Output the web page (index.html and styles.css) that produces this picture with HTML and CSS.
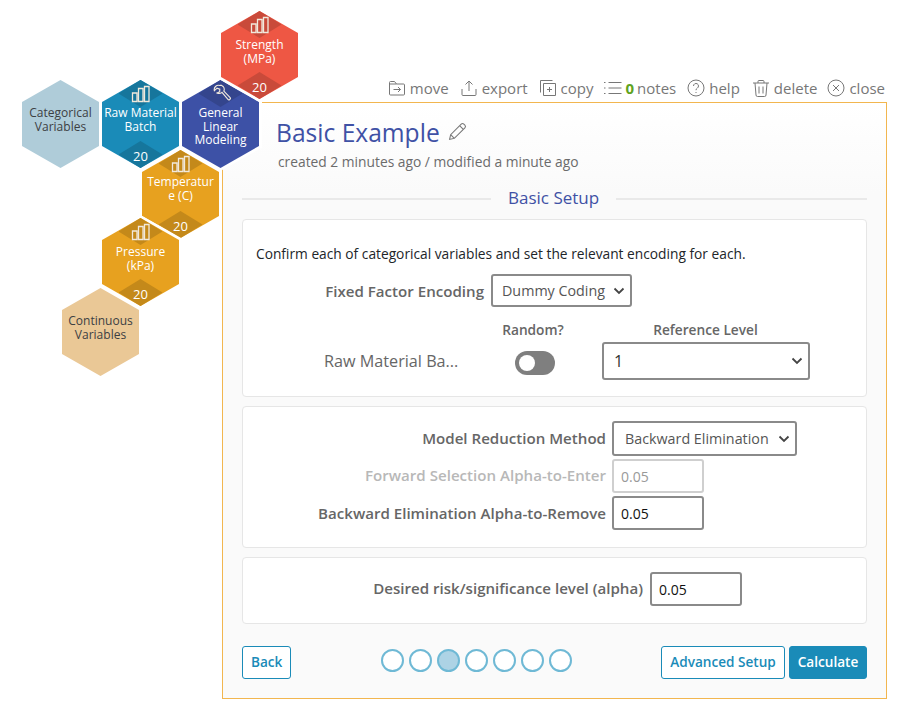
FILE: index.html
```html
<!DOCTYPE html>
<html lang="en">
<head>
<meta charset="utf-8">
<title>Basic Example</title>
<link rel="stylesheet" href="styles.css">
</head>
<body>
<div class="stage">
  <div class="hex hex-strength red">
    <div class="hex-fill"></div><div class="cap"></div><div class="foot"></div>
    <svg class="ico" viewBox="0 0 20 18"><path d="M1.500 8h4.500v8.500h-4.500zM7.500 3.500h4.500v13h-4.500zM13.500 1.500h4.500v15h-4.500z"/></svg>
    <div class="label">Strength<br>(MPa)</div><div class="num">20</div>
  </div>
  <div class="hex hex-cat pale-blue"><div class="hex-fill"></div><div class="label dark">Categorical<br>Variables</div></div>
  <div class="hex hex-raw blue">
    <div class="hex-fill"></div><div class="cap"></div><div class="foot"></div>
    <svg class="ico" viewBox="0 0 20 18"><path d="M1.500 8h4.500v8.500h-4.500zM7.500 3.500h4.500v13h-4.500zM13.500 1.500h4.500v15h-4.500z"/></svg>
    <div class="label">Raw Material<br>Batch</div><div class="num">20</div>
  </div>
  <div class="hex hex-glm indigo">
    <div class="hex-fill"></div><div class="cap"></div>
    <svg class="ico wrench" viewBox="0 0 20 20"><path d="M8.200 1.500a4.600 4.600 0 0 0-5.700 5.600l2.800-2.700 2.900 1-.1 2.800-2.800 1.200a4.700 4.700 0 0 0 5.200-.6l6.300 7.500c1 1.200 3.400-.6 2.300-2l-6.600-6.900a4.600 4.600 0 0 0-2.300-5.900z"/></svg>
    <div class="label three">General<br>Linear<br>Modeling</div>
  </div>
  <div class="hex hex-temp amber">
    <div class="hex-fill"></div><div class="cap"></div><div class="foot"></div>
    <svg class="ico" viewBox="0 0 20 18"><path d="M1.500 8h4.500v8.500h-4.500zM7.500 3.500h4.500v13h-4.500zM13.500 1.500h4.500v15h-4.500z"/></svg>
    <div class="label">Temperatur<br>e (C)</div><div class="num">20</div>
  </div>
  <div class="hex hex-press amber">
    <div class="hex-fill"></div><div class="cap"></div><div class="foot"></div>
    <svg class="ico" viewBox="0 0 20 18"><path d="M1.500 8h4.500v8.500h-4.500zM7.500 3.500h4.500v13h-4.500zM13.500 1.500h4.500v15h-4.500z"/></svg>
    <div class="label">Pressure<br>(kPa)</div><div class="num">20</div>
  </div>
  <div class="hex hex-cont pale-amber"><div class="hex-fill"></div><div class="label dark">Continuous<br>Variables</div></div>

  <nav class="toolbar">
    <span class="tool"><svg viewBox="0 0 18 18"><path d="M1.500 5V3.500a1 1 0 0 1 1-1h4l2 2.500h7a1 1 0 0 1 1 1v9a1 1 0 0 1-1 1h-13a1 1 0 0 1-1-1zM1.500 5h7M5.500 10.500h7M10 8l2.500 2.500L10 13"/></svg>move</span>
    <span class="tool"><svg viewBox="0 0 18 18"><path d="M9 12V2M5.500 5.500 9 2l3.500 3.500M2 10v5.500a1 1 0 0 0 1 1h12a1 1 0 0 0 1-1V10"/></svg>export</span>
    <span class="tool tool-copy"><svg viewBox="0 0 18 18"><path d="M13.500 1.500h-12v12M4.500 4.500h12v12h-12zM10.500 8v5M8 10.500h5"/></svg>copy</span>
    <span class="tool"><svg class="wide" viewBox="0 0 19 18"><path d="M1 3.500h1.500M1 9h1.500M1 14.500h1.500M5.500 3.500h13M5.500 9h13M5.500 14.500h13"/></svg><b class="count">0</b>notes</span>
    <span class="tool tool-help"><svg viewBox="0 0 18 18"><circle cx="9" cy="9" r="8"/><path d="M6.500 7a2.500 2.500 0 1 1 3.800 2.100C9.400 9.700 9 10.200 9 11.200M9 13v1"/></svg>help</span>
    <span class="tool tool-delete"><svg viewBox="0 0 18 18"><path d="M1 4h16M6 4V2.500a1 1 0 0 1 1-1h4a1 1 0 0 1 1 1V4M3 4l1 12a1.500 1.500 0 0 0 1.500 1.500h7A1.500 1.500 0 0 0 14 16l1-12M7 7.500v7M11 7.500v7"/></svg>delete</span>
    <span class="tool"><svg viewBox="0 0 18 18"><circle cx="9" cy="9" r="8"/><path d="M6 6l6 6M12 6l-6 6"/></svg>close</span>
  </nav>

  <main class="panel">
    <header class="head">
      <h1 class="title">Basic Example <svg class="pencil" viewBox="0 0 18 18"><path d="M1.500 16.500l1-4.500L12.500 2a1.800 1.800 0 0 1 2.500 0l1 1a1.800 1.800 0 0 1 0 2.500L6 15.500zM2.500 12 6 15.500M11 3.500 14.500 7"/></svg></h1>
      <p class="meta">created 2 minutes ago / modified a minute ago</p>
    </header>
    <div class="divider"><span>Basic Setup</span></div>

    <section class="card card-one">
      <p class="intro">Confirm each of categorical variables and set the relevant encoding for each.</p>
      <div class="row row-fixed">
        <label class="lbl lbl-fixed">Fixed Factor Encoding</label>
        <select class="ctl sel-dummy"><option>Dummy Coding</option></select>
      </div>
      <div class="heads">
        <span class="h-random">Random?</span>
        <span class="h-ref">Reference Level</span>
      </div>
      <div class="row row-var">
        <span class="var-name">Raw Material Ba...</span>
        <span class="toggle-cell"><span class="toggle"></span></span>
        <select class="ctl sel-ref"><option>1</option></select>
      </div>
    </section>

    <section class="card card-two">
      <div class="row row-method">
        <label class="lbl lbl-method">Model Reduction Method</label>
        <select class="ctl sel-method"><option>Backward Elimination</option></select>
      </div>
      <div class="row row-method is-disabled">
        <label class="lbl lbl-method">Forward Selection Alpha-to-Enter</label>
        <input class="ctl num-in" value="0.05" disabled>
      </div>
      <div class="row row-method">
        <label class="lbl lbl-method lbl-last">Backward Elimination Alpha-to-Remove</label>
        <input class="ctl num-in" value="0.05">
      </div>
    </section>

    <section class="card card-three">
      <div class="row">
        <label class="lbl lbl-alpha">Desired risk/significance level (alpha)</label>
        <input class="ctl num-in" value="0.05">
      </div>
    </section>

    <footer class="actions">
      <button class="btn">Back</button>
      <div class="dots"><i></i><i></i><i class="on"></i><i></i><i></i><i></i><i></i></div>
      <div class="btn-group">
        <button class="btn btn-adv">Advanced Setup</button>
        <button class="btn primary">Calculate</button>
      </div>
    </footer>
  </main>
</div>
</body>
</html>
```

FILE: styles.css
```css
* { box-sizing: border-box; }
html, body { margin: 0; padding: 0; background: #fff; }
body { font-family: "Open Sans", "Noto Sans", sans-serif; color: #212529; font-size: 14px; }
.stage { position: relative; width: 907px; height: 721px; padding-top: 77px; overflow: hidden; }

/* hexagons */
.hex { position: absolute; width: 77px; height: 88px; z-index: 2; color: #fff; text-align: center; }
.hex::before { content: ""; position: absolute; inset: -3px; background: #fff; clip-path: polygon(50% 0, 100% 25%, 100% 75%, 50% 100%, 0 75%, 0 25%); }
.hex-fill, .cap, .foot { position: absolute; }
.hex-fill { inset: 0; clip-path: polygon(50% 0, 100% 25%, 100% 75%, 50% 100%, 0 75%, 0 25%); background: var(--c); }
.cap, .foot { left: 16.500px; width: 44px; height: 27px; background: var(--d); clip-path: polygon(50% 0, 100% 50%, 50% 100%, 0 50%); }
.cap { top: 0; }
.foot { bottom: 0; }
.ico { position: absolute; left: 28.500px; top: 5px; width: 20px; height: 18px; fill: none; stroke: #f1e9dc; stroke-width: 1.300; }
.wrench { left: 29.500px; top: 4px; width: 19px; height: 19px; stroke-width: 1.200; }
.label { position: absolute; left: 0; right: 0; top: 27px; font-size: 12px; line-height: 14px; font-weight: 400; white-space: nowrap; }
.label.three { top: 26px; line-height: 13.500px; }
.hex-raw .label { top: 26px; }
.hex-temp .label { top: 25px; }
.label.dark { color: #3c4043; top: 26px; }
.num { position: absolute; left: 0; right: 0; bottom: 3px; font-size: 13px; line-height: 18px; }
.red { --c: #ee5744; --d: #c94a3a; }
.blue { --c: #1a8bb8; --d: #16769c; }
.indigo { --c: #3d51a6; --d: #34458d; }
.amber { --c: #e7a11f; --d: #c4891a; }
.pale-blue { --c: #afccd9; }
.pale-amber { --c: #eac896; }
.hex-strength { left: 221px; top: 11px; z-index: 3; }
.hex-cat { left: 22px; top: 80px; }
.hex-raw { left: 102px; top: 80px; }
.hex-glm { left: 182px; top: 80px; }
.hex-temp { left: 142px; top: 150px; z-index: 3; }
.hex-press { left: 102px; top: 218px; z-index: 4; }
.hex-cont { left: 62px; top: 288px; z-index: 3; }

/* toolbar */
.toolbar { display: flex; justify-content: flex-end; gap: 11px; height: 25px; padding-right: 22px; }
.tool { display: flex; align-items: center; gap: 4px; font-size: 15px; line-height: 22px; color: #777; height: 22px; }
.tool svg { width: 18px; height: 18px; fill: none; stroke: #777; stroke-width: 1; flex: none; }
.tool svg.wide { width: 19px; }
.tool-copy { margin-right: -2px; }
.tool-help { margin-right: 1px; }
.tool-delete { margin-right: -1px; }
.count { color: #5fa31f; font-weight: 700; margin-right: -1px; }

/* panel */
.panel { margin-left: 222px; width: 665px; height: 597px; border: 1px solid #f2b64f; background: linear-gradient(#fff, #fafafa 90px); padding: 0 19px; display: flex; flex-direction: column; }
.head { padding-left: 34px; padding-top: 13px; }
.title { margin: 0; font-size: 24.600px; line-height: 34px; font-weight: 400; color: #3f51a5; display: flex; align-items: center; gap: 2px; white-space: pre; }
.pencil { width: 19px; height: 19px; fill: none; stroke: #777; stroke-width: 1; margin-top: -4px; }
.meta { margin: 2px 0 0 2px; font-size: 13.800px; line-height: 20px; color: #6b6b6b; }
.divider { display: flex; align-items: center; height: 24px; margin-top: 14px; color: #3f51a5; font-size: 17px; gap: 17px; }
.divider span { margin-top: -2px; }
.divider::before, .divider::after { content: ""; height: 2px; background: #e9e9e9; margin-top: 1px; }
.divider::before { width: 249px; }
.divider::after { flex: 1; }
.card { background: #fff; border: 1px solid #e6e6e6; border-radius: 4px; margin-top: 9px; }
.card-one { height: 178px; margin-top: 9px; padding: 24px 13px 0; }
.card-two { height: 142px; padding-top: 14px; }
.card-three { height: 67px; padding-top: 14px; }
.intro { margin: 0; font-size: 13.750px; line-height: 20px; color: #212529; }
.row { display: flex; align-items: center; gap: 7px; margin-bottom: 3px; }
.row-method { gap: 6px; }
.lbl { font-size: 15.100px; font-weight: 600; color: #666; text-align: right; white-space: nowrap; }
.is-disabled .lbl { color: #b8b8b8; }
.lbl-fixed { width: 228px; }
.lbl-method { width: 363px; margin-bottom: 2px; }
.lbl-last { margin-bottom: 0; }
.lbl-alpha { width: 400px; margin-bottom: 3px; }
.row-fixed { margin-top: 10px; margin-bottom: 0; }
.ctl { font-family: inherit; font-size: 14.300px; color: #333; background: #fff; border: 2px solid #8a8a8a; border-radius: 3px; height: 34px; }
select.ctl { appearance: none; padding: 0 4px 0 9px; background: #fff url("data:image/svg+xml,%3Csvg xmlns='http://www.w3.org/2000/svg' viewBox='0 0 12 8'%3E%3Cpath d='M1.500 1.500 6 6l4.500-4.500' fill='none' stroke='%23444' stroke-width='1.800'/%3E%3C/svg%3E") no-repeat right 5px center / 12px 8px; }
.num-in { width: 92px; padding: 0 7px; color: #111; font-size: 14px; }
.num-in:disabled { border-color: #cfcfcf; color: #999; background: #fff; }
.sel-dummy { width: 141px; height: 33px; color: #555; }
select.sel-method { width: 185px; height: 35px; color: #555; padding-left: 11px; }
select.sel-ref { width: 208px; height: 38px; font-size: 16px; padding-left: 10px; }
.heads { display: grid; grid-template-columns: 227px 100px 19px 207px; margin-top: 13px; height: 20px; font-size: 13.700px; font-weight: 600; color: #666; line-height: 20px; }
.h-random { grid-column: 2; text-align: center; }
.h-ref { grid-column: 4; text-align: center; padding-left: 0; }
.row-var { margin-top: 2px; gap: 0; margin-bottom: 0; }
.var-name { width: 203px; padding-left: 68px; font-size: 16.200px; color: #666; white-space: nowrap; }
.toggle-cell { width: 143px; display: flex; padding-left: 56px; margin-top: 3px; }
.toggle { display: block; position: relative; width: 40px; height: 24px; border-radius: 12px; background: #7f7f7f; }
.toggle::before { content: ""; position: absolute; left: 4px; top: 4px; width: 16px; height: 16px; background: #fff; border-radius: 50%; }
.actions { display: flex; align-items: center; justify-content: space-between; margin-top: 22px; position: relative; }
.btn { font-family: inherit; font-size: 13.600px; font-weight: 600; color: #1a8bb8; background: #fff; border: 1px solid #1a8bb8; border-radius: 3px; height: 33px; padding: 0 8px 2px; }
.btn.primary { background: #1a8bb8; color: #fff; }
.btn-group { display: flex; gap: 4px; }
.btn-adv { width: 124px; padding-left: 0; padding-right: 0; }
.btn-group .primary { width: 78px; padding-left: 0; padding-right: 0; }
.dots { display: flex; gap: 5px; position: absolute; left: 138.500px; top: 3px; }
.dots i { display: block; width: 23px; height: 23px; border-radius: 50%; border: 2px solid #6fb9d5; background: #fff; }
.dots i.on { background: #add3e5; border-color: #6fb9d5; }
```
